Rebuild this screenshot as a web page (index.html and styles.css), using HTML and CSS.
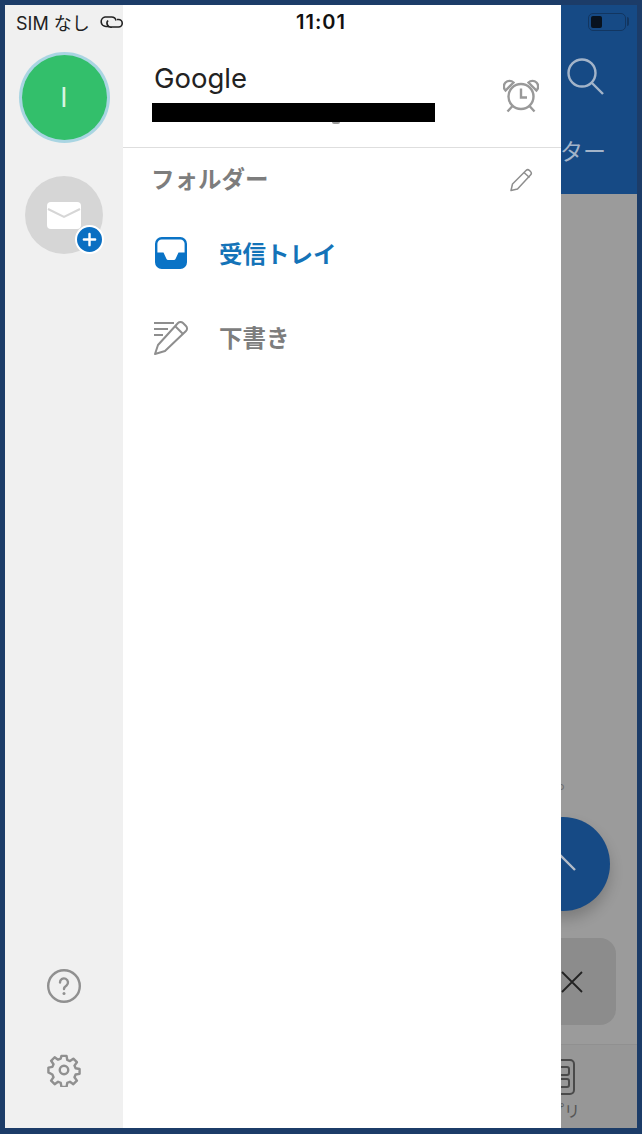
FILE: index.html
```html
<!DOCTYPE html>
<html lang="ja">
<head>
  <meta charset="UTF-8">
  <meta name="viewport" content="width=device-width, initial-scale=1">
  <title>受信トレイ</title>
  <link rel="stylesheet" href="styles.css">
</head>
<body>
  <div class="phone">
    <!-- status bar sits over all three columns -->
    <div class="status-bar">
      <div class="carrier">
        <span>SIM なし</span>
        <svg class="link-icon" width="24" height="17" viewBox="0 0 24 17" fill="none" stroke="#222" stroke-width="1.6">
          <path d="M9 12.500H6a4.800 4.800 0 0 1-1-9.500h6.500a4.500 4.500 0 0 1 4.500 3.500"/>
          <path d="M8 6.500a4 4 0 0 0 4 6.500h6.500a3.500 3.500 0 0 0 0-7.500H17"/>
        </svg>
      </div>
      <div class="clock">11:01</div>
      <div class="battery"><div class="battery-level"></div></div>
    </div>

    <div class="rail">
      <div class="accounts">
        <div class="avatar-ring"><div class="avatar">I</div></div>
        <div class="add-account">
          <svg width="34" height="27" viewBox="0 0 34 27">
            <rect width="34" height="27" rx="4" fill="#fff"/>
            <path d="M1 7l16 8 16-8" fill="none" stroke="#d6d6d6" stroke-width="2"/>
          </svg>
          <div class="plus-badge">
            <svg width="15" height="15" viewBox="0 0 16 16" stroke="#fff" stroke-width="2.600" stroke-linecap="round">
              <path d="M8 2v12M2 8h12"/>
            </svg>
          </div>
        </div>
      </div>
      <div class="rail-tools">
        <svg width="36" height="36" viewBox="0 0 36 36" fill="none" stroke="#909090" stroke-width="2.400">
          <circle cx="18" cy="18" r="15.800"/>
          <path d="M14 14.500a4 4 0 1 1 6.500 3c-1.700 1.200-2.500 2-2.500 3.500" stroke-linecap="round"/>
          <circle cx="18" cy="25.500" r="1.500" fill="#909090" stroke="none"/>
        </svg>
        <svg width="34" height="34" viewBox="0 0 24 24" fill="none" stroke="#909090" stroke-width="1.700" stroke-linejoin="round">
          <circle cx="12" cy="12" r="3"/>
          <path d="M10.200 2h3.600l.5 2.900 1.900.8 2.400-1.700 2.500 2.500-1.700 2.400.8 1.900 2.800.5v3.400l-2.800.5-.8 1.900 1.700 2.400-2.500 2.500-2.400-1.700-1.900.8-.5 2.900h-3.600l-.5-2.900-1.900-.8-2.400 1.700-2.500-2.500 1.700-2.400-.8-1.900L1 13.700v-3.400l2.800-.5.8-1.900-1.700-2.400 2.500-2.500 2.400 1.700 1.900-.8z"/>
        </svg>
      </div>
    </div>

    <div class="drawer">
      <div class="account-head">
        <div class="account-info">
          <div class="account-name">Google</div>
          <div class="account-mail"></div>
        </div>
        <svg class="alarm" width="36" height="34" viewBox="0 0 36 34" fill="none" stroke="#999" stroke-width="2.400">
          <circle cx="18" cy="17.500" r="12.500"/>
          <path d="M18 9.500V18.500h6"/>
          <path d="M2.500 11.500a5.500 5.500 0 0 1 8-8zM33.500 11.500a5.500 5.500 0 0 0-8-8z"/>
          <path d="M9.500 27l-5 5.500M26.500 27l5 5.500"/>
        </svg>
      </div>
      <div class="folder-head">
        <span>フォルダー</span>
        <svg class="edit-icon" width="24" height="24" viewBox="0 0 24 24" fill="none" stroke="#8e8e8e" stroke-width="1.500" stroke-linejoin="round">
          <path d="M2 22.500l1.500-6.500L17 2.500a2.500 2.500 0 0 1 3.500 0l1 1a2.500 2.500 0 0 1 0 3.500L8.500 21z"/>
          <path d="M15 4.500l5.500 5"/>
        </svg>
      </div>
      <div class="folder-list">
        <div class="folder folder-active">
          <svg class="folder-icon" width="32" height="32" viewBox="0 0 32 32">
            <rect x="1.200" y="1.200" width="29.600" height="29.600" rx="5.500" fill="#fff" stroke="#0a73c6" stroke-width="2.400"/>
            <path d="M1 15.500h7.500l3 6.500q.5 1 1.500 1h6q1 0 1.500-1l3-6.500H31V26a5 5 0 0 1-5 5H6a5 5 0 0 1-5-5z" fill="#0a73c6"/>
          </svg>
          <span>受信トレイ</span>
        </div>
        <div class="folder">
          <svg class="folder-icon" width="36" height="36" viewBox="0 0 36 36" fill="none" stroke="#8e8e8e" stroke-width="2" stroke-linejoin="round">
            <path d="M1 4h20M1 10h14M1 16h9"/>
            <path d="M2 35l3-9L25 4a3.500 3.500 0 0 1 5 0l3 3a3.500 3.500 0 0 1 0 5L12 32z"/>
            <path d="M22 7l8 8"/>
          </svg>
          <span>下書き</span>
        </div>
      </div>
    </div>

    <div class="behind">
      <div class="behind-header">
        <svg class="search" width="40" height="40" viewBox="0 0 40 40" fill="none" stroke="#a3b4c9" stroke-width="2.400">
          <circle cx="16" cy="16" r="13.500"/>
          <path d="M26 26l11 11"/>
        </svg>
        <div class="behind-title">ター</div>
      </div>
      <div class="behind-body">
        <div class="behind-note">。</div>
        <div class="fab">
          <svg width="36" height="20" viewBox="0 0 36 20" fill="none" stroke="#b5bdc8" stroke-width="2.400">
            <path d="M1 19L18 2l17 17"/>
          </svg>
        </div>
        <div class="toast">
          <svg width="22" height="22" viewBox="0 0 22 22" fill="none" stroke="#222" stroke-width="1.800">
            <path d="M1 1l20 20M21 1L1 21"/>
          </svg>
        </div>
      </div>
      <div class="behind-tabs">
        <div class="tab-item">
          <svg class="tab-icon" width="28" height="36" viewBox="0 0 28 36" fill="none" stroke="#4a4a4a" stroke-width="2">
            <rect x="1" y="1" width="26" height="34" rx="4"/>
            <rect x="6" y="8" width="16" height="8" rx="2"/>
            <rect x="6" y="20" width="16" height="8" rx="2"/>
          </svg>
          <div class="tab-label">アプリ</div>
        </div>
      </div>
    </div>
  </div>
</body>
</html>
```

FILE: styles.css
```css
* {
  box-sizing: border-box;
}

html,
body {
  margin: 0;
  height: 100%;
}

body {
  background-color: #fff;
  font-family: Inter, "Liberation Sans", "Noto Sans CJK JP", sans-serif;
  overflow: hidden;
}

.phone {
  position: relative;
  width: 642px;
  height: 1134px;
  border: 5px solid #1c3c68;
  border-bottom-width: 6px;
  display: flex;
  overflow: hidden;
}

.status-bar {
  position: absolute;
  top: 0;
  left: 0;
  right: 0;
  height: 34px;
  padding: 0 11px 0 11px;
  display: grid;
  grid-template-columns: 1fr auto 1fr;
  align-items: center;
  z-index: 3;
}

.carrier {
  display: flex;
  align-items: center;
  gap: 10px;
  font-size: 18px;
  color: #222;
}

.clock {
  font-size: 20px;
  letter-spacing: 1px;
  font-weight: 600;
  color: #111;
}

.battery {
  position: relative;
  justify-self: end;
  width: 38px;
  height: 18px;
  padding: 2px;
  border: 1.500px solid #123661;
  border-radius: 5px;
}

.battery::after {
  content: "";
  position: absolute;
  top: 3px;
  right: -4px;
  width: 2px;
  height: 9px;
  border-radius: 0 2px 2px 0;
  background-color: #123661;
}

.battery-level {
  width: 11px;
  height: 100%;
  background-color: #08121e;
  border-radius: 2px;
}

.rail {
  width: 118px;
  flex-shrink: 0;
  background-color: #f0f0f0;
  display: flex;
  flex-direction: column;
  justify-content: space-between;
  align-items: center;
  padding: 47px 0 41px;
}

.accounts {
  display: flex;
  flex-direction: column;
  align-items: center;
  gap: 33px;
}

.avatar-ring {
  width: 91px;
  height: 91px;
  padding: 3px;
  border-radius: 50%;
  background-color: #a9d5e2;
}

.avatar {
  width: 100%;
  height: 100%;
  border-radius: 50%;
  background-color: #33bf6b;
  color: #d8f5e2;
  font-size: 27px;
  display: flex;
  align-items: center;
  justify-content: center;
}

.add-account {
  position: relative;
  width: 78px;
  height: 78px;
  border-radius: 50%;
  background-color: #d6d6d6;
  display: flex;
  align-items: center;
  justify-content: center;
}

.plus-badge {
  position: absolute;
  right: -1px;
  bottom: 0;
  width: 29px;
  height: 29px;
  border-radius: 50%;
  background-color: #0a6fc2;
  border: 2px solid #fff;
  display: flex;
  align-items: center;
  justify-content: center;
}

.rail-tools {
  display: flex;
  flex-direction: column;
  align-items: center;
  gap: 49px;
}

.drawer {
  position: relative;
  z-index: 2;
  width: 438px;
  flex-shrink: 0;
  background-color: #fff;
  display: flex;
  flex-direction: column;
}

.account-head {
  height: 143px;
  padding: 58px 22px 0 29px;
  border-bottom: 1px solid #dedede;
  display: flex;
  justify-content: space-between;
  align-items: flex-start;
}

.account-name {
  font-size: 27.500px;
  line-height: 30px;
  color: #222;
  margin-left: 2px;
}

.account-mail {
  position: relative;
  width: 283px;
  height: 19px;
  margin-top: 10px;
  background-color: #000;
}

/* bit of the address showing under the black bar */
.account-mail::after {
  content: "";
  position: absolute;
  left: 180px;
  bottom: -2px;
  width: 8px;
  height: 2px;
  border-radius: 0 0 4px 4px;
  background-color: #999;
}

.alarm {
  margin-top: 16px;
}

.folder-head {
  display: flex;
  justify-content: space-between;
  align-items: center;
  padding: 13px 28px 0 28px;
  font-size: 23.500px;
  font-weight: 700;
  color: #7d7d7d;
}

.edit-icon {
  margin-top: 4px;
}

.folder-list {
  padding-top: 16px;
}

.folder {
  height: 84px;
  padding-left: 29px;
  display: flex;
  align-items: center;
  font-size: 23.500px;
  font-weight: 700;
  color: #7d7d7d;
}

.folder-active {
  color: #1473b8;
}

.folder-icon {
  width: 38px;
  margin-right: 29px;
}

.folder-active .folder-icon {
  margin-left: 3px;
  width: 32px;
  margin-right: 32px;
}

.behind {
  flex: 1;
  display: flex;
  flex-direction: column;
  background-color: #9b9b9b;
}

.behind-header {
  position: relative;
  height: 189px;
  background-color: #164a85;
}

.search {
  position: absolute;
  top: 52px;
  left: 5px;
}

.behind-title {
  position: absolute;
  top: 128px;
  left: -1px;
  font-size: 23px;
  color: #a3b4c9;
  white-space: nowrap;
}

.behind-body {
  position: relative;
  flex: 1;
}

.behind-note {
  position: absolute;
  top: 572px;
  left: -4px;
  font-size: 20px;
  color: #6f6f6f;
}

.fab {
  position: absolute;
  top: 623px;
  left: -45px;
  width: 94px;
  height: 94px;
  padding: 0 10px 6px 0;
  border-radius: 50%;
  background-color: #164a85;
  box-shadow: 0 8px 14px rgba(0, 0, 0, 0.2);
  display: flex;
  align-items: center;
  justify-content: center;
}

.toast {
  position: absolute;
  top: 744px;
  left: -50px;
  width: 105px;
  height: 87px;
  padding-right: 33px;
  border-radius: 16px;
  background-color: #8c8c8c;
  display: flex;
  align-items: center;
  justify-content: flex-end;
}

.behind-tabs {
  height: 84px;
  background-color: #979797;
  border-top: 1px solid #909090;
  padding-top: 14px;
}

.tab-item {
  width: 60px;
  margin-left: -35px;
  display: flex;
  flex-direction: column;
  align-items: center;
}

.tab-icon {
  margin-left: 10px;
}

.tab-label {
  margin-top: 3px;
  font-size: 16px;
  color: #555;
  white-space: nowrap;
}
```
